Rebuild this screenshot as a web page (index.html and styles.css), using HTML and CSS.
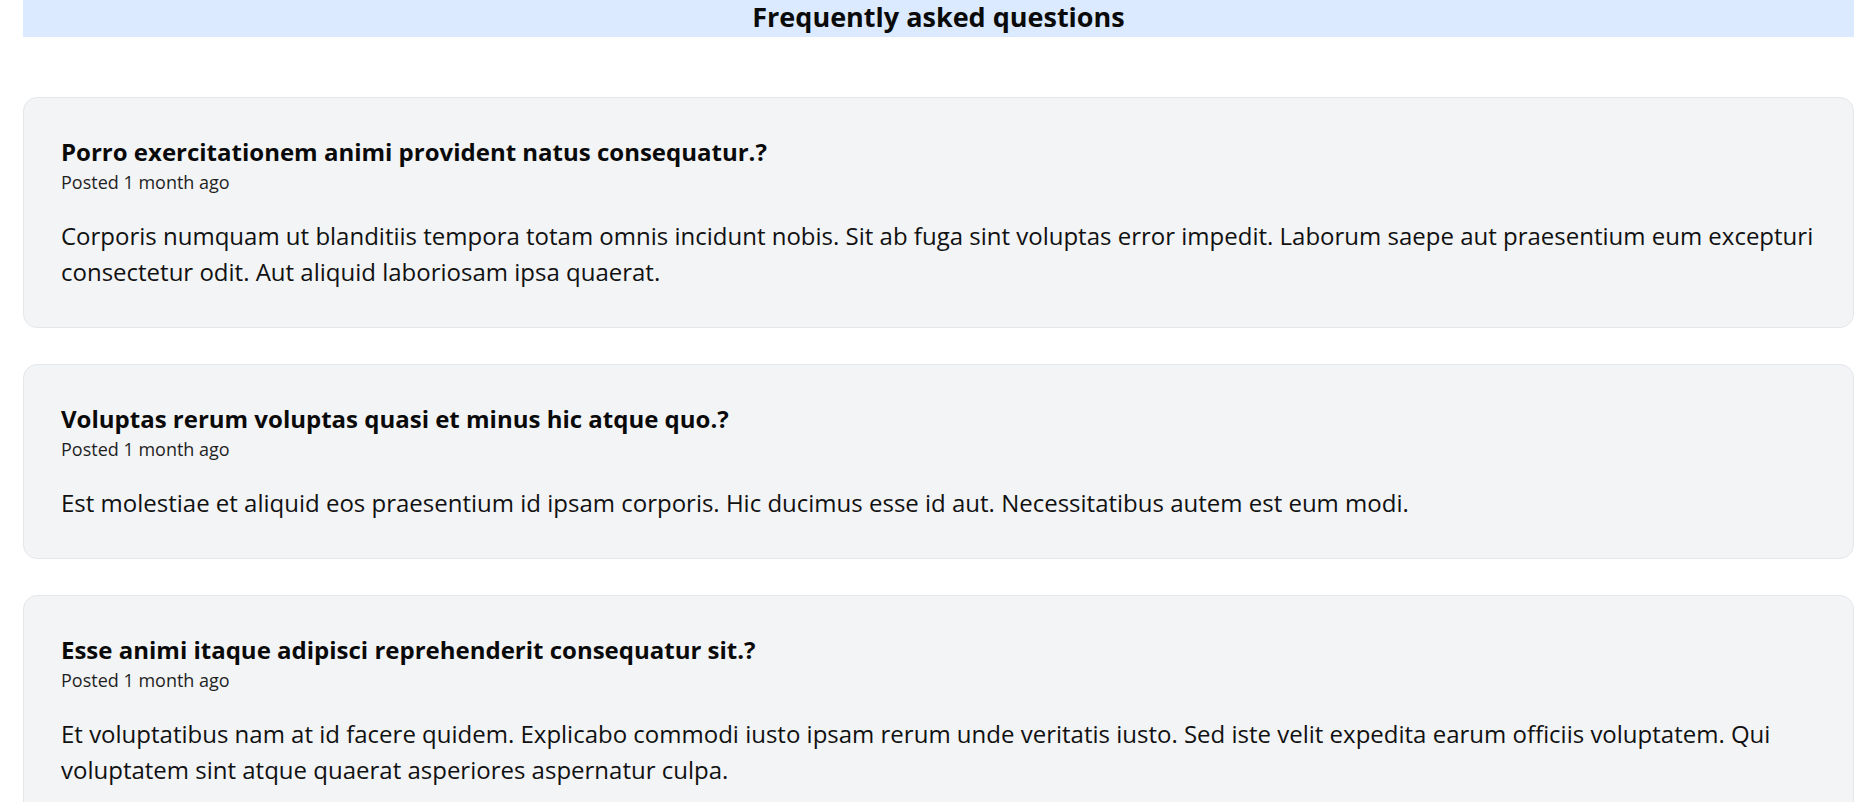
FILE: index.html
```html
<!DOCTYPE html>
<html lang="en">
<head>
<meta charset="utf-8">
<title>Frequently asked questions</title>
<link rel="stylesheet" href="styles.css">
</head>
<body>
<main class="page">
  <header class="banner">
    <h1 class="banner-title">Frequently asked questions</h1>
  </header>
  <section class="faq-list">
    <article class="faq-card">
      <h2 class="faq-q">Porro exercitationem animi provident natus consequatur.?</h2>
      <p class="faq-meta">Posted 1 month ago</p>
      <p class="faq-a">Corporis numquam ut blanditiis tempora totam omnis incidunt nobis. Sit ab fuga sint voluptas error impedit. Laborum saepe aut praesentium eum excepturi consectetur odit. Aut aliquid laboriosam ipsa quaerat.</p>
    </article>
    <article class="faq-card">
      <h2 class="faq-q">Voluptas rerum voluptas quasi et minus hic atque quo.?</h2>
      <p class="faq-meta">Posted 1 month ago</p>
      <p class="faq-a">Est molestiae et aliquid eos praesentium id ipsam corporis. Hic ducimus esse id aut. Necessitatibus autem est eum modi.</p>
    </article>
    <article class="faq-card">
      <h2 class="faq-q">Esse animi itaque adipisci reprehenderit consequatur sit.?</h2>
      <p class="faq-meta">Posted 1 month ago</p>
      <p class="faq-a">Et voluptatibus nam at id facere quidem. Explicabo commodi iusto ipsam rerum unde veritatis iusto. Sed iste velit expedita earum officiis voluptatem. Qui voluptatem sint atque quaerat asperiores aspernatur culpa.</p>
    </article>
  </section>
</main>
</body>
</html>
```

FILE: styles.css
```css
html, body {
  margin: 0;
  padding: 0;
  background: #ffffff;
}
body {
  font-family: "Open Sans", "Noto Sans", sans-serif;
  color: #111111;
}
.page {
  padding: 0 9px 0 23px;
}
.banner {
  background: #dbeafe;
  height: 37px;
  display: flex;
  align-items: flex-start;
  justify-content: center;
}
.banner-title {
  margin: 0;
  font-size: 27px;
  line-height: 33px;
  font-weight: 700;
  color: #0a0a0a;
}
.faq-list {
  display: flex;
  flex-direction: column;
  gap: 36px;
  padding-top: 60px;
}
.faq-card {
  background: #f3f4f6;
  border: 1px solid #e5e7eb;
  border-radius: 14px;
  padding: 38px 37px 37px 37px;
}
.faq-q {
  margin: 0;
  font-size: 24px;
  line-height: 32px;
  font-weight: 700;
  color: #0a0a0a;
}
.faq-meta {
  margin: 0;
  font-size: 18px;
  line-height: 28px;
  color: #1f1f1f;
}
.faq-a {
  margin: 22px 0 0 0;
  font-size: 24px;
  line-height: 36px;
  color: #111111;
}
```
